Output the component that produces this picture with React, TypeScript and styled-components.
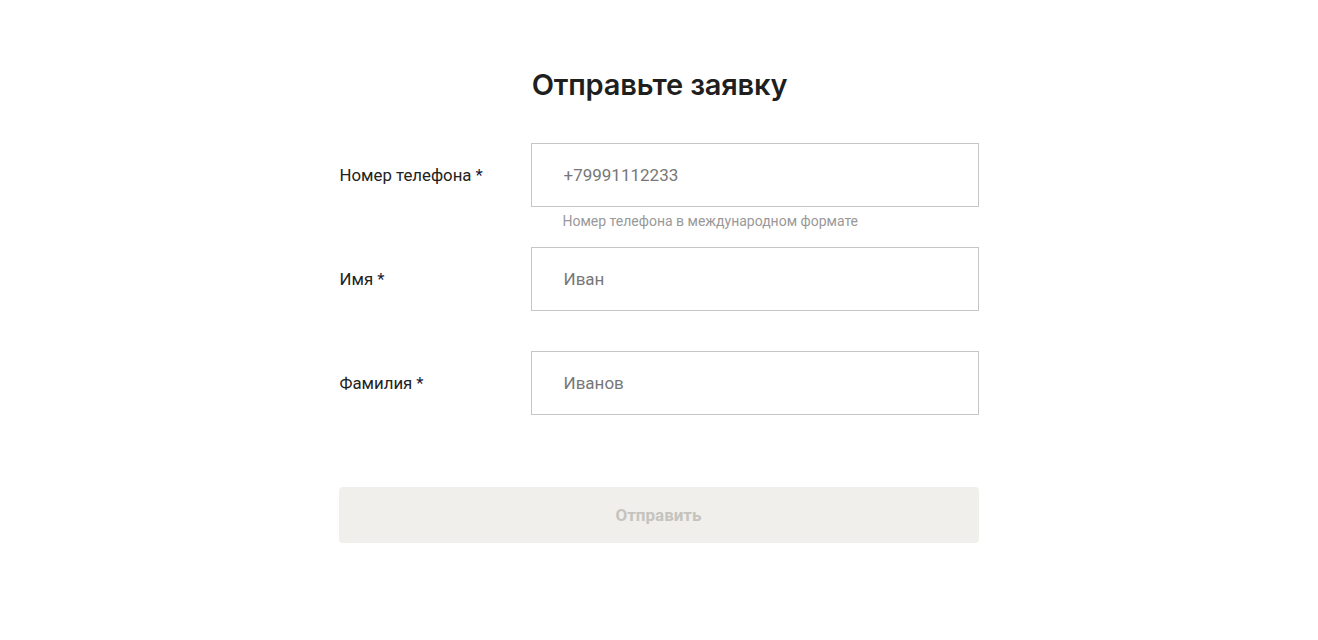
import React from "react";
import styled, { createGlobalStyle } from "styled-components";

const Global = createGlobalStyle`
  html, body { margin: 0; padding: 0; background: #fff; }
  body { font-family: Roboto, "Noto Sans", sans-serif; color: #222; }
  * { box-sizing: border-box; }
`;

const Page = styled.div`
  display: flex;
  justify-content: center;
  padding-top: 67px;
`;

const Form = styled.form`
  width: 640px;
  margin-left: 1px;
  display: flex;
  flex-direction: column;
`;

const Title = styled.h1`
  margin: 0 0 40px;
  font-family: Inter, "Open Sans", sans-serif;
  font-weight: 600;
  font-size: 29px;
  line-height: 36px;
  letter-spacing: -0.2px;
  text-align: center;
  color: #1f1f1f;
`;

const Row = styled.div`
  display: grid;
  grid-template-columns: 191px 448px;
`;

const Label = styled.label`
  height: 64px;
  display: flex;
  align-items: center;
  font-size: 16.8px;
  color: #222;
`;

const Star = styled.span`
  margin-left: 4px;
  color: #1a1a3a;
`;

const Field = styled.div`
  display: flex;
  flex-direction: column;
`;

const Input = styled.input`
  height: 64px;
  width: 100%;
  border: 1px solid #c6c6c6;
  padding: 0 32px;
  font-family: Roboto, "Noto Sans", sans-serif;
  font-size: 17px;
  color: #777;
  outline: none;
  &::placeholder { color: #777; }
`;

const Hint = styled.div`
  height: 40px;
  padding: 5px 0 0 32px;
  font-size: 14px;
  line-height: 18px;
  color: #999;
`;

const Button = styled.button`
  margin-top: 32px;
  margin-left: -1px;
  height: 56px;
  width: 640px;
  border: none;
  border-radius: 4px;
  background: #f0efeb;
  color: #c5c3be;
  font-family: Roboto, "Noto Sans", sans-serif;
  font-weight: 700;
  font-size: 17px;
`;

const fields = [
  { label: "Номер телефона", placeholder: "+79991112233", hint: "Номер телефона в международном формате" },
  { label: "Имя", placeholder: "Иван", hint: "" },
  { label: "Фамилия", placeholder: "Иванов", hint: "" },
];

export default function App() {
  return (
    <>
      <Global />
      <Page>
        <Form onSubmit={(e) => e.preventDefault()}>
          <Title>Отправьте заявку</Title>
          {fields.map((f) => (
            <Row key={f.label}>
              <Label>
                {f.label}
                <Star>*</Star>
              </Label>
              <Field>
                <Input placeholder={f.placeholder} />
                <Hint>{f.hint}</Hint>
              </Field>
            </Row>
          ))}
          <Button type="button" disabled>Отправить</Button>
        </Form>
      </Page>
    </>
  );
}
